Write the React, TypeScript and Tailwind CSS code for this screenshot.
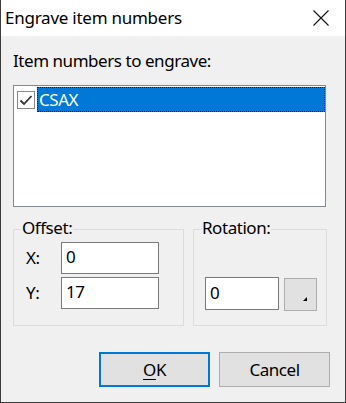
import React from "react";

function Check() {
  return (
    <div className="w-[18px] h-[18px] border border-[#8a8a8a] bg-white flex items-center justify-center shrink-0">
      <svg width="14" height="14" viewBox="0 0 14 14">
        <path d="M1.5 7.5 L5 11 L12.5 3" fill="none" stroke="#333" strokeWidth="1.8" />
      </svg>
    </div>
  );
}

function Group({ label, className, children }: { label: string; className: string; children: React.ReactNode }) {
  return (
    <div className={`relative border border-[#dcdcdc] ${className}`}>
      <span className="absolute left-[7px] top-[-14px] bg-[#f0f0f0] px-[1px] leading-[24px]">{label}</span>
      {children}
    </div>
  );
}

export default function App() {
  return (
    <div
      className="w-[346px] h-[403px] bg-[#f0f0f0] border-x border-b border-[#3c3c3c] flex flex-col text-[17px] tracking-[-0.45px] text-black"
      style={{ fontFamily: '"Noto Sans", "Open Sans", sans-serif' }}
    >
      {/* Title bar */}
      <div className="h-[36px] bg-white flex items-center justify-between pl-[4px] pr-[16px] shrink-0">
        <span className="leading-[24px] tracking-[-0.25px]">Engrave item numbers</span>
        <svg width="16" height="16" viewBox="0 0 16 16">
          <path d="M0.5 0.5 L15.5 15.5 M15.5 0.5 L0.5 15.5" stroke="#111" strokeWidth="1.1" />
        </svg>
      </div>

      <div className="flex flex-col px-[12px]">
        <div className="mt-[13px] leading-[24px]">Item numbers to engrave:</div>

        {/* List */}
        <div className="mt-[12px] h-[122px] w-[313px] border border-[#828790] bg-white pt-[1px] pl-[3px]">
          <div className="flex items-center gap-[2px]">
            <Check />
            <div className="flex-1 h-[25px] bg-[#0078d7] border border-dotted border-[#222] text-white leading-[23px] pl-[1px]">
              CSAX
            </div>
          </div>
        </div>

        {/* Groups */}
        <div className="flex gap-[9px] mt-[22px]">
          <Group label="Offset:" className="w-[171px] h-[97px]">
            <div className="flex flex-col gap-[3px] mt-[12px] pl-[11px]">
              <div className="flex items-center">
                <span className="w-[36px] pl-[1px]">X:</span>
                <div className="w-[98px] h-[32px] border border-[#7a7a7a] bg-white pl-[4px] leading-[28px]">0</div>
              </div>
              <div className="flex items-center">
                <span className="w-[36px] pl-[1px]">Y:</span>
                <div className="w-[98px] h-[32px] border border-[#7a7a7a] bg-white pl-[4px] leading-[28px]">17</div>
              </div>
            </div>
          </Group>
          <Group label="Rotation:" className="w-[134px] h-[97px]">
            <div className="flex items-start gap-[5px] mt-[47px] pl-[11px]">
              <div className="w-[74px] h-[33px] border border-[#7a7a7a] bg-white pl-[4px] leading-[29px]">0</div>
              <div className="relative w-[33px] h-[33px] mt-[1px] border border-[#adadad] bg-[#e1e1e1]">
                <svg className="absolute right-[9px] bottom-[9px]" width="4" height="4" viewBox="0 0 4 4">
                  <path d="M4 0 L4 4 L0 4 Z" fill="#000" />
                </svg>
              </div>
            </div>
          </Group>
        </div>

        {/* Buttons */}
        <div className="flex justify-end gap-[9px] mt-[26px] pr-[3px]">
          <button className="w-[111px] h-[35px] border-2 border-[#0078d7] bg-[#e1e1e1] leading-[24px]">
            <span className="underline underline-offset-[3px]">O</span>K
          </button>
          <button className="w-[111px] h-[35px] border border-[#adadad] bg-[#e1e1e1] leading-[24px]">
            Cancel
          </button>
        </div>
      </div>
    </div>
  );
}
